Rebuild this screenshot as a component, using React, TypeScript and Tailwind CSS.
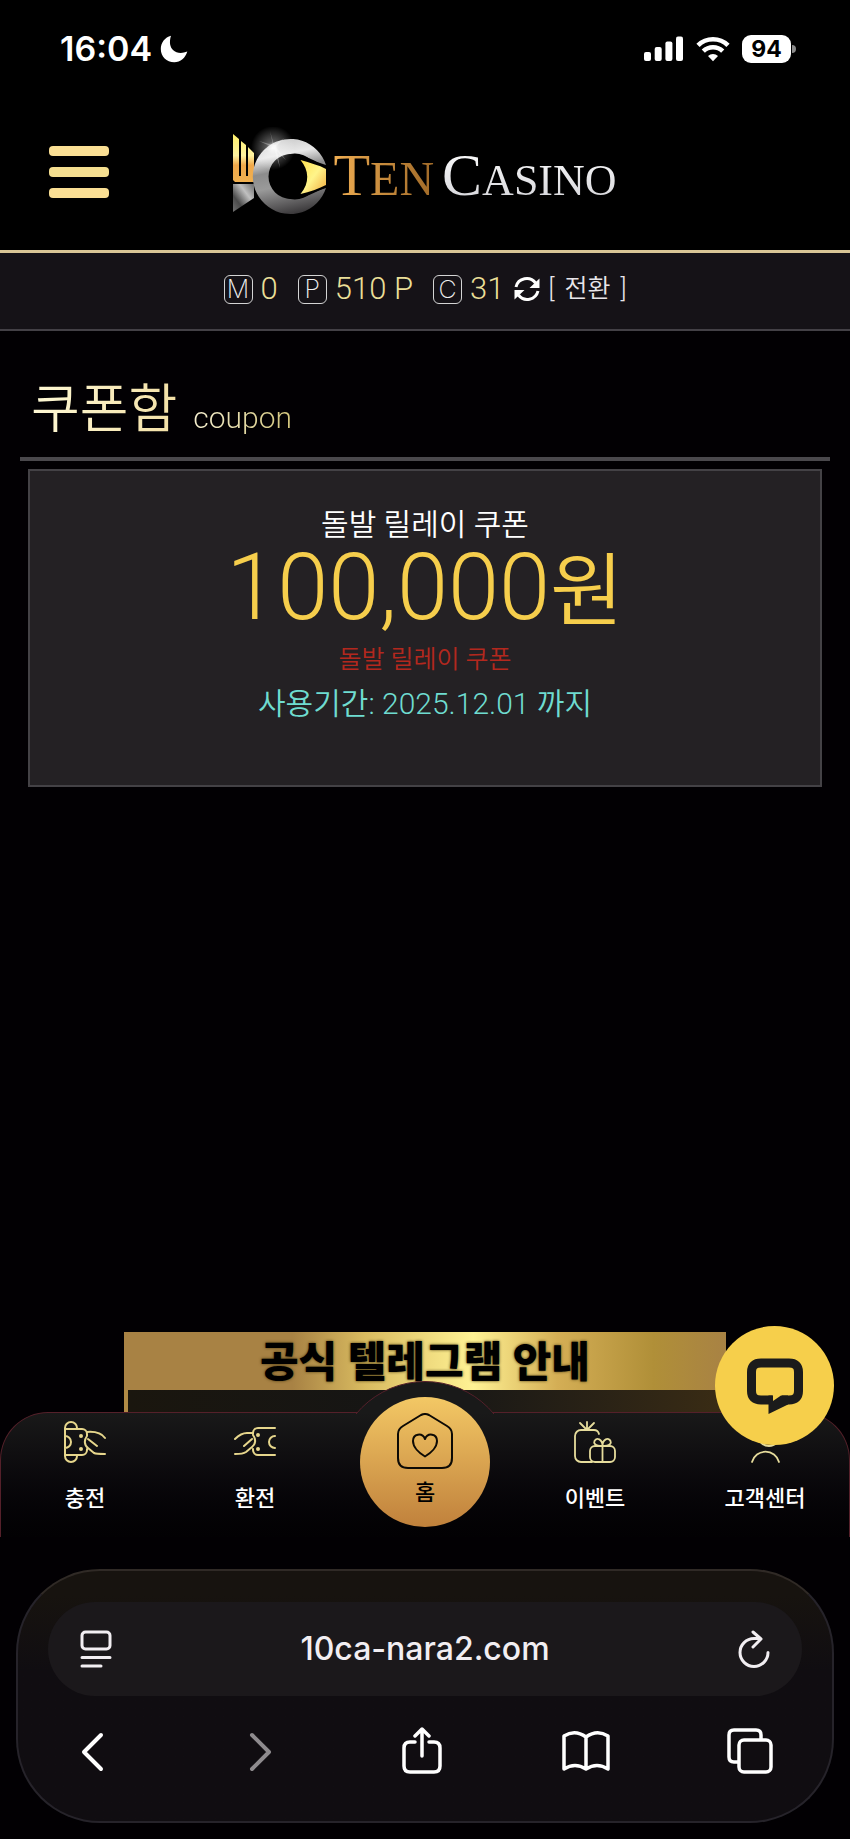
import type { ReactNode } from "react";

function StatusBar() {
  return (
    <div className="flex h-[98px] items-center justify-between pr-[54px] pl-[60px] font-['Inter','Liberation_Sans',sans-serif] text-white">
      <div className="flex items-center gap-2">
        <span className="text-[34px] leading-10 font-semibold">16:04</span>
        <svg viewBox="0 0 28 28" className="size-7" fill="#fff" aria-label="Do not disturb">
          <path d="M11 .7C9 7 10 12 13 15c3.500 3.500 9 3.800 14.300 1.600C25.500 23 20.500 27.300 14.300 27.300 6.500 27.300.8 21.600.8 14 .8 7.500 5 2.300 11 .7Z" />
        </svg>
      </div>
      <div className="flex items-center gap-3">
        <svg viewBox="0 0 40 26" className="h-[26px] w-10" fill="#fff" aria-label="Signal">
          <rect x="0" y="16" width="7" height="9" rx="2" />
          <rect x="10.700" y="11" width="7" height="14" rx="2" />
          <rect x="21.400" y="5.500" width="7" height="19.500" rx="2" />
          <rect x="32" y="0.500" width="7" height="24.500" rx="2" />
        </svg>
        <svg viewBox="0 0 34 26" className="h-[26px] w-[34px]" fill="none" stroke="#fff" strokeWidth="4.600" aria-label="Wi-Fi">
          <path d="M2 9.300a21.500 21.500 0 0 1 30 0" />
          <path d="M7.300 15.200a14 14 0 0 1 19.400 0" />
          <path d="M17 25.300l-5-5.200a7.300 7.300 0 0 1 10 0Z" fill="#fff" stroke="none" />
        </svg>
        <div className="flex items-center gap-px">
          <span className="flex h-7 w-[49px] items-center justify-center rounded-[9px] bg-white text-[23px] leading-7 font-bold text-black">94</span>
          <span className="h-2 w-1 rounded-r-full bg-[#8a8a8a]" />
        </div>
      </div>
    </div>
  );
}

function LogoMark() {
  return (
    <svg viewBox="0 0 96 90" className="h-[90px] w-24" aria-hidden="true">
      <defs>
        <linearGradient id="goldBars" x1="0" y1="0" x2="0" y2="1">
          <stop offset="0" stopColor="#fff06a" />
          <stop offset=".45" stopColor="#fff3a0" />
          <stop offset=".65" stopColor="#f0a84a" />
          <stop offset="1" stopColor="#f0b050" />
        </linearGradient>
        <linearGradient id="steel" x1=".3" y1="0" x2=".5" y2="1">
          <stop offset="0" stopColor="#c8c8c8" />
          <stop offset=".22" stopColor="#e8e8e8" />
          <stop offset=".42" stopColor="#8c8c8c" />
          <stop offset=".62" stopColor="#9a9a9a" />
          <stop offset="1" stopColor="#3c3a3c" />
        </linearGradient>
        <linearGradient id="foot" x1="1" y1="0" x2="0" y2="1">
          <stop offset="0" stopColor="#6a6a6a" />
          <stop offset=".35" stopColor="#c0c0c0" />
          <stop offset=".7" stopColor="#4a4a4a" />
          <stop offset="1" stopColor="#707070" />
        </linearGradient>
        <linearGradient id="pupil" x1="0" y1="0" x2="1" y2="1">
          <stop offset="0" stopColor="#ffe14d" />
          <stop offset=".5" stopColor="#fff48a" />
          <stop offset="1" stopColor="#f0a93c" />
        </linearGradient>
        <radialGradient id="glow">
          <stop offset="0" stopColor="#fff" stopOpacity=".9" />
          <stop offset=".3" stopColor="#fff" stopOpacity=".35" />
          <stop offset="1" stopColor="#fff" stopOpacity="0" />
        </radialGradient>
      </defs>
      <path d="M0 7l6 5v37h2V14l5 4v31h2V20l6 6v29H2l-2-2Z" fill="url(#goldBars)" />
      <path d="M0 57h21v14L0 85Z" fill="url(#foot)" />
      <path d="M93 38A37.500 37.500 0 1 0 93 61L78 66A23 23 0 1 1 78 33Z" fill="url(#steel)" />
      <path d="M58 27C70 27 83 34 93 40L93 60C83 65 70 72 58 72A22.500 22.500 0 0 1 58 27Z" fill="#000" />
      <path d="M67.500 33C77 36 86 38 93 42V58C85 62 77 65 67.500 67C77 56 76 43 67.500 33Z" fill="url(#pupil)" />
      <circle cx="40" cy="21" r="22" fill="url(#glow)" />
      <path d="M37 4l4 14 10-7-8 9 10 13-12-11-12 2 10-4-13-6 14 4Z" fill="#fff" opacity=".3" />
      <path d="M40 18l7 23-4-23Z" fill="#fff" opacity=".35" />
    </svg>
  );
}

function Header() {
  return (
    <header className="grid h-[155px] grid-cols-[1fr_auto_1fr] items-center border-b-[3px] border-[#d9c596] px-[49px] pb-1">
      <button type="button" aria-label="메뉴" className="flex w-[60px] flex-col gap-[11px]">
        <span className="h-[10px] rounded-sm bg-[#fadf94]" />
        <span className="h-[10px] rounded-sm bg-[#f5df90]" />
        <span className="h-[10px] rounded-sm bg-[#fadf94]" />
      </button>
      <a href="#home" className="flex items-center gap-1">
        <LogoMark />
        <span className="flex items-baseline gap-2 pt-3 font-['Liberation_Serif',serif] leading-[60px]">
          <span className="bg-linear-to-r from-[#f0ae52] to-[#a06a28] bg-clip-text text-[48px] text-transparent">
            <span className="text-[60px]">T</span>EN
          </span>
          <span className="bg-linear-to-b from-white to-[#cfcfd4] bg-clip-text text-[44px] text-transparent">
            <span className="text-[60px]">C</span>ASINO
          </span>
        </span>
      </a>
    </header>
  );
}

function Balance({ mark, children }: { mark: string; children: ReactNode }) {
  return (
    <span className="flex items-center gap-2">
      <span className="flex size-[29px] items-center justify-center rounded-md border border-[#d4d4d4] font-['Inter',sans-serif] text-[25px] leading-7 font-extralight text-[#f0f0f0]">
        {mark}
      </span>
      <span className="text-[31px] leading-8 text-[#eadf98]">{children}</span>
    </span>
  );
}

function RefreshIcon() {
  return (
    <svg viewBox="0 0 26 26" className="size-[26px]" fill="none" stroke="#fff" strokeWidth="3" aria-hidden="true">
      <path d="M2 11A11 11 0 0 1 21.500 7M24 15A11 11 0 0 1 4.500 19" />
      <path d="M25.500 2.500V12H15.500ZM.5 23.500V14H10.500Z" fill="#fff" stroke="none" />
    </svg>
  );
}

function CardSlotIcon() {
  return (
    <svg viewBox="0 0 42 42" className="size-[42px]" fill="none" stroke="#e6d68c" strokeWidth="2" strokeLinecap="round" strokeLinejoin="round">
      <path d="M1 7a6 6 0 0 1 12 0v1M1 7v28a6 6 0 0 0 12 0v-1M1 8h17a5 5 0 0 1 5 5v2M1 34h17a5 5 0 0 0 5-5v-1M23 11q13-1 18 6M23 15c-3 4-3 9 1 12l6 5q2 1 11 1M24 18l9 7M1 15a6 6 0 0 1 0 12" />
      <circle cx="17" cy="15" r="1" fill="#e6d68c" />
      <circle cx="17" cy="28" r="1" fill="#e6d68c" />
    </svg>
  );
}

function CardHandIcon() {
  return (
    <svg viewBox="0 0 42 42" className="size-[42px]" fill="none" stroke="#e6d68c" strokeWidth="2" strokeLinecap="round" strokeLinejoin="round">
      <path d="M41 7H24a5 5 0 0 0-5 5v1M41 34H24a5 5 0 0 1-5-5v-1M19 12H13Q7 12 1 18M19 14c3 4 3 9-1 12l-6 5q-3 2-11 2M18 18l-8 7M41 15a6 6 0 1 0 0 12" />
      <circle cx="24" cy="14" r="1" fill="#e6d68c" />
      <circle cx="24" cy="28" r="1" fill="#e6d68c" />
    </svg>
  );
}

function GiftIcon() {
  return (
    <svg viewBox="0 0 42 42" className="size-[42px]" fill="none" stroke="#e6dc9c" strokeWidth="1.800" strokeLinecap="round" strokeLinejoin="round">
      <path d="M18 41H7a6 6 0 0 1-6-6V15a6 6 0 0 1 6-6h13q4 0 5 4M13 9V1M13 9L6 2M13 9l7-7" />
      <rect x="16" y="25" width="25" height="16" rx="5" />
      <path d="M28.500 25v16M28.500 25c-8 0-9-3-8-5 2-4 8-2 8 5ZM28.500 25c8 0 9-3 8-5-2-4-8-2-8 5Z" />
    </svg>
  );
}

function SupportIcon() {
  return (
    <svg viewBox="0 0 42 42" className="size-[42px]" fill="none" stroke="#e6dc9c" strokeWidth="1.800" strokeLinecap="round">
      <circle cx="25" cy="14" r="11" />
      <path d="M8 41a14 14 0 0 1 27 0" />
    </svg>
  );
}

function HomeIcon() {
  return (
    <svg viewBox="0 0 56 56" className="size-14" fill="none" stroke="#0d0a05" strokeWidth="2" strokeLinejoin="round">
      <path d="M24 2Q28 0 32 2L50 13Q55 16 55 21V45Q55 55 45 55H11Q1 55 1 45V21Q1 16 6 13Z" />
      <path d="M28 43.500C22 40 16 34 16 28C16 21 25 19 28 26C31 19 40 21 40 28C40 34 34 40 28 43.500Z" />
    </svg>
  );
}

function NavItem({ icon, label }: { icon: ReactNode; label: string }) {
  return (
    <a href="#nav" className="flex flex-col items-center gap-5 pt-2">
      {icon}
      <span className="text-[22px] leading-8 font-medium text-white">{label}</span>
    </a>
  );
}

function BottomNav() {
  return (
    <nav className="relative h-[125px] rounded-t-[48px] border border-b-0 border-[#55202a] bg-linear-to-b from-[#191919] to-[#020103]">
      <div className="absolute -top-8 left-1/2 h-[33px] w-[180px] -translate-x-1/2 overflow-hidden">
        <div className="size-[180px] rounded-full border border-[#55202a] bg-[#191919]" />
      </div>
      <div className="-mx-px grid grid-cols-5">
        <NavItem icon={<CardSlotIcon />} label="충전" />
        <NavItem icon={<CardHandIcon />} label="환전" />
        <a
          href="#home"
          className="absolute -top-4 left-1/2 flex size-[130px] -translate-x-1/2 flex-col items-center gap-2 rounded-full bg-linear-to-b from-[#f3c865] to-[#c0813c] pt-4"
        >
          <HomeIcon />
          <span className="text-[22px] leading-8 font-medium text-black">홈</span>
        </a>
        <div />
        <NavItem icon={<GiftIcon />} label="이벤트" />
        <NavItem icon={<SupportIcon />} label="고객센터" />
      </div>
      <button
        type="button"
        aria-label="채팅 상담"
        className="absolute -top-[87px] right-[15px] flex size-[119px] items-center justify-center rounded-full bg-[#f6cf4b]"
      >
        <svg viewBox="0 0 56 56" className="size-14" fill="none" stroke="#1b1b1b" strokeWidth="9" aria-hidden="true">
          <path d="M25.500 42H14Q4.500 42 4.500 33V14Q4.500 5 14 5H42Q51.500 5 51.500 14V33Q51.500 42 42 42H35" />
          <path d="M21.500 37.500V56L41 46.500V37.500H34L26 43V37.500Z" fill="#1b1b1b" stroke="none" />
        </svg>
      </button>
    </nav>
  );
}

function BrowserBar() {
  return (
    <div className="mx-4 mt-8 mb-4 flex h-[254px] flex-col rounded-[84px] border-2 border-[#26232a] border-t-[#302a26] bg-linear-to-b from-[#17130f] from-10% to-[#100d11] to-40% px-[30px] pt-[31px] font-['Inter','Liberation_Sans',sans-serif] text-[#f2eef2]">
      <div className="flex h-[94px] items-center justify-between rounded-full bg-[#1b181b] px-8">
        <button type="button" aria-label="Page menu">
          <svg viewBox="0 0 32 38" className="h-[38px] w-8" fill="none" stroke="currentColor" strokeWidth="3" strokeLinecap="round">
            <rect x="2" y="2" width="28" height="17" rx="3.500" />
            <path d="M2 27.500h28M2 36h19" />
          </svg>
        </button>
        <span className="text-[32px] leading-10 font-medium">10ca-nara2.com</span>
        <button type="button" aria-label="Reload">
          <svg viewBox="0 0 32 38" className="h-[38px] w-8" fill="none" stroke="currentColor" strokeWidth="3" strokeLinecap="round" strokeLinejoin="round">
            <path d="M21 8.500H16A14 14 0 1 0 30 22.500M15 2l8 7-8 8" />
          </svg>
        </button>
      </div>
      <div className="mt-[31px] flex items-center justify-between pr-[26px] pl-[18px] text-white">
        <button type="button" aria-label="Back">
          <svg viewBox="0 0 50 50" className="size-[50px]" fill="none" stroke="currentColor" strokeWidth="4" strokeLinecap="round" strokeLinejoin="round">
            <path d="M35 8L18 25l17 17" />
          </svg>
        </button>
        <button type="button" aria-label="Forward" className="text-[#8e8b8e]">
          <svg viewBox="0 0 50 50" className="size-[50px]" fill="none" stroke="currentColor" strokeWidth="4" strokeLinecap="round" strokeLinejoin="round">
            <path d="M21 8l17 17-17 17" />
          </svg>
        </button>
        <button type="button" aria-label="Share">
          <svg viewBox="0 0 50 50" className="size-[50px]" fill="none" stroke="currentColor" strokeWidth="3.500" strokeLinecap="round" strokeLinejoin="round">
            <path d="M19 15h-5q-6 0-6 6v18q0 6 6 6h24q6 0 6-6V21q0-6-6-6h-5M26 29V2M19 9l7-7 7 7" />
          </svg>
        </button>
        <button type="button" aria-label="Bookmarks">
          <svg viewBox="0 0 50 50" className="size-[50px]" fill="none" stroke="currentColor" strokeWidth="3.500" strokeLinecap="round" strokeLinejoin="round">
            <path d="M25 10Q14 2 3 9V42Q14 35 25 42Q36 35 47 42V9Q36 2 25 10V42" />
          </svg>
        </button>
        <button type="button" aria-label="Tabs">
          <svg viewBox="0 0 50 50" className="size-[50px]" fill="none" stroke="currentColor" strokeWidth="3.500" strokeLinecap="round" strokeLinejoin="round">
            <rect x="13" y="13" width="32" height="32" rx="5" />
            <path d="M12 35H8q-5 0-5-5V8q0-5 5-5h22q5 0 5 5v4" />
          </svg>
        </button>
      </div>
    </div>
  );
}

export default function App() {
  return (
    <div className="flex min-h-screen flex-col bg-[#020003] font-['Roboto','Noto_Sans_CJK_KR',sans-serif]">
      <div className="bg-black">
        <StatusBar />
        <Header />
      </div>
      <div className="flex h-[78px] items-center justify-center gap-5 border-b-2 border-[#434046] bg-[#151217] pb-1 font-[350]">
        <Balance mark="M">0</Balance>
        <Balance mark="P">510 P</Balance>
        <div className="flex items-center gap-[10px]">
          <Balance mark="C">31</Balance>
          <button type="button" className="flex items-center gap-2 text-white">
            <RefreshIcon />
            <span className="flex gap-[10px] text-[25px] leading-8 text-[#e8e6ea]">
              <span>[</span>
              <span>전환</span>
              <span>]</span>
            </span>
          </button>
        </div>
      </div>

      <main className="flex flex-1 flex-col">
        <h1 className="mx-5 flex items-baseline gap-4 border-b-4 border-[#4a484c] px-[11px] pt-[43px] pb-[11px] font-[350]">
          <span className="bg-linear-to-r from-[#fff9d6] to-[#f3e0a6] bg-clip-text text-[53px] leading-[72px] text-transparent">쿠폰함</span>
          <span className="bg-linear-to-r from-[#f6efd0] to-[#d3c57c] bg-clip-text text-[30px] text-transparent">coupon</span>
        </h1>
        <section className="mx-7 mt-2 flex h-[318px] flex-col items-center border-2 border-[#444246] bg-[#242124] pt-9 text-center font-[350]">
          <h2 className="text-[30px] leading-9 text-white">돌발 릴레이 쿠폰</h2>
          <p className="flex items-baseline text-[92px] leading-[90px] text-[#f6ce4c]">
            100,000<span className="text-[80px]">원</span>
          </p>
          <p className="text-[25px] leading-[46px] text-[#b3281e]">돌발 릴레이 쿠폰</p>
          <p className="text-[30px] leading-[42px] text-[#6fdcd0]">사용기간: 2025.12.01 까지</p>
        </section>
        <section className="mx-[124px] mt-auto h-20 border-l-4 border-[#b08a45] bg-linear-to-r from-[#1a160e] via-[#151515] to-[#3a2c14]">
          <h2 className="-ml-1 flex h-[58px] items-center justify-center bg-linear-[90deg,#a88244_0%,#a88244_28%,#d9bb60_40%,#fff294_58%,#d4ae55_72%,#b08f38_88%,#a88244_100%] pt-1 text-[42px] leading-[54px] font-black text-black text-shadow-[0_0_3px_#4a3a10]">
            공식 텔레그램 안내
          </h2>
        </section>
      </main>

      <BottomNav />
      <BrowserBar />
    </div>
  );
}
